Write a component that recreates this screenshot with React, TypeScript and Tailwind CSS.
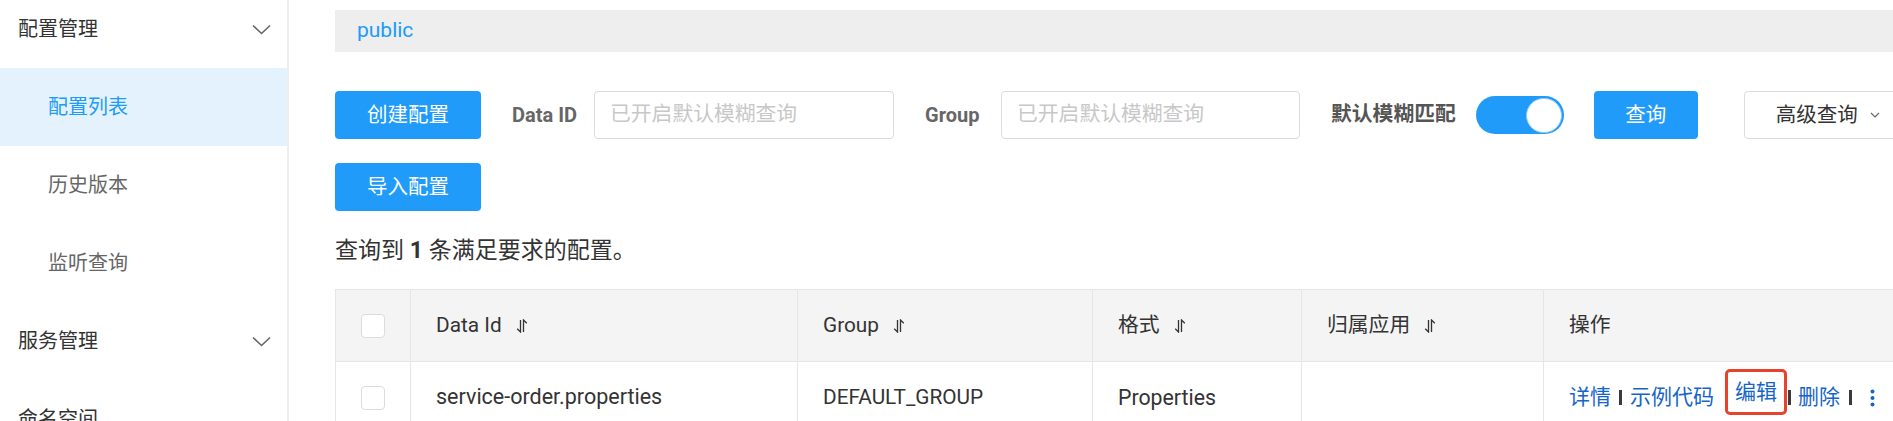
import type { ReactNode } from "react";

const NAV = [
  { label: "配置管理", group: true },
  { label: "配置列表", active: true },
  { label: "历史版本" },
  { label: "监听查询" },
  { label: "服务管理", group: true },
  { label: "命名空间", top: true },
];

function Chevron() {
  return (
    <svg width="19" height="11" viewBox="0 0 19 11" fill="none" stroke="#666" strokeWidth="1.6">
      <path d="M1 1.5l8.5 8 8.5-8" />
    </svg>
  );
}

function SortIcon() {
  return (
    <svg width="12" height="14" viewBox="0 0 12 14" fill="none" stroke="#333" strokeWidth="1.3" className="ml-[14px] shrink-0">
      <path d="M4.5 1v12L1.2 9.8" />
      <path d="M7.5 13V1l3.3 3.2" />
    </svg>
  );
}

function Checkbox() {
  return <span className="block h-[24px] w-[24px] rounded-[4px] border border-[#dcdcdc] bg-white" />;
}

function Sep({ className = "" }: { className?: string }) {
  return <span className={`inline-block h-[15px] w-[3px] bg-[#3a3a3a] ${className}`} />;
}

function Cell({ children, last, center }: { children?: ReactNode; last?: boolean; center?: boolean }) {
  return (
    <div
      className={`flex items-center ${center ? "justify-center" : "pl-[25px]"} ${
        last ? "" : "border-r border-[#e6e6e6]"
      }`}
    >
      {children}
    </div>
  );
}

export default function App() {
  return (
    <div className="flex h-[421px] w-full overflow-hidden bg-white font-['Roboto','Noto_Sans_CJK_SC',sans-serif] text-[20px] text-[#333]">
      {/* left nav */}
      <aside className="h-full w-[289px] shrink-0 overflow-hidden border-r-2 border-[#eeeeee]">
        <div className="-mt-[10px]">
          {NAV.map((n) =>
            n.group || n.top ? (
              <div key={n.label} className="flex h-[78px] items-center justify-between pl-[18px] pr-[16px] text-[#333]">
                <span>{n.label}</span>
                {n.group && <Chevron />}
              </div>
            ) : (
              <div
                key={n.label}
                className={`flex h-[78px] items-center pl-[48px] ${
                  n.active ? "bg-[#e4f2fd] text-[#209bfa]" : "text-[#666]"
                }`}
              >
                {n.label}
              </div>
            )
          )}
        </div>
      </aside>

      {/* main */}
      <main className="min-w-0 flex-1 overflow-hidden pl-[46px] pt-[10px]">
        <div className="flex h-[42px] items-center bg-[#eeeeee] pl-[22px] text-[21px] text-[#209bfa]">public</div>

        <div className="mt-[39px] flex h-[48px] items-center whitespace-nowrap">
          <button className="h-[48px] w-[146px] shrink-0 rounded-[4px] bg-[#209bfa] text-[20.5px] text-white">创建配置</button>
          <span className="ml-[31px] w-[82px] shrink-0 font-bold text-[#666]">Data ID</span>
          <div className="flex h-[48px] w-[300px] shrink-0 items-center rounded-[4px] border border-[#dcdcdc] pl-[15px] text-[20.8px] text-[#c8c8c8]">
            已开启默认模糊查询
          </div>
          <span className="ml-[31px] w-[76px] shrink-0 font-bold text-[#666]">Group</span>
          <div className="flex h-[48px] w-[299px] shrink-0 items-center rounded-[4px] border border-[#dcdcdc] pl-[15px] text-[20.8px] text-[#c8c8c8]">
            已开启默认模糊查询
          </div>
          <span className="ml-[31px] shrink-0 text-[20.8px] font-bold text-[#555]">默认模糊匹配</span>
          <span className="ml-[20px] flex h-[38px] w-[88px] shrink-0 items-center justify-end rounded-full bg-[#209bfa] pr-[2px]">
            <span className="h-[35px] w-[36px] rounded-full border border-[#8ccafc] bg-white" />
          </span>
          <button className="ml-[30px] h-[48px] w-[104px] shrink-0 rounded-[4px] bg-[#209bfa] text-[20.5px] text-white">查询</button>
          <button className="ml-[46px] flex h-[48px] w-[170px] shrink-0 items-center rounded-[4px] border border-[#dcdcdc] bg-white pl-[31px] text-[20.5px] text-[#333]">
            高级查询
            <svg width="10" height="6" viewBox="0 0 10 6" fill="none" stroke="#666" strokeWidth="1.2" className="ml-[12px]">
              <path d="M1 1l4 4 4-4" />
            </svg>
          </button>
        </div>

        <button className="mt-[24px] h-[48px] w-[146px] rounded-[4px] bg-[#209bfa] text-[20.5px] text-white">导入配置</button>

        <p className="mt-[25px] text-[23px] leading-[30px] text-[#333]">
          查询到 <b>1</b> 条满足要求的配置。
        </p>

        <div className="mt-[23px] w-[1700px] border-l border-t border-[#e6e6e6] text-[20.8px]">
          <div className="grid h-[71px] grid-cols-[75px_387px_295px_209px_242px_492px] bg-[#f4f4f4]">
            <Cell center>
              <Checkbox />
            </Cell>
            <Cell>
              Data Id <SortIcon />
            </Cell>
            <Cell>
              Group <SortIcon />
            </Cell>
            <Cell>
              格式 <SortIcon />
            </Cell>
            <Cell>
              归属应用 <SortIcon />
            </Cell>
            <Cell last>操作</Cell>
          </div>
          <div className="grid h-[72px] grid-cols-[75px_387px_295px_209px_242px_492px] border-t border-[#e6e6e6]">
            <Cell center>
              <Checkbox />
            </Cell>
            <Cell>
              <span className="text-[21.5px]">service-order.properties</span>
            </Cell>
            <Cell>DEFAULT_GROUP</Cell>
            <Cell>
              <span className="text-[21.3px]">Properties</span>
            </Cell>
            <Cell />
            <Cell last>
              <div className="flex items-center whitespace-nowrap text-[21px] text-[#1565c8]">
                <span>详情</span>
                <Sep className="mx-[8px]" />
                <span>示例代码</span>
                <span className="-mt-[12px] ml-[11px] rounded-[5px] border-[3px] border-[#e8412c] px-[7px] py-[6px] leading-[28px]">
                  编辑
                </span>
                <Sep className="ml-[1px] mr-[7px]" />
                <span>删除</span>
                <Sep className="ml-[9px] mr-[18px]" />
                <svg width="5" height="18" viewBox="0 0 5 18" fill="#1565c8">
                  <circle cx="2.5" cy="2.5" r="2" />
                  <circle cx="2.5" cy="9" r="2" />
                  <circle cx="2.5" cy="15.5" r="2" />
                </svg>
              </div>
            </Cell>
          </div>
        </div>
      </main>
    </div>
  );
}
